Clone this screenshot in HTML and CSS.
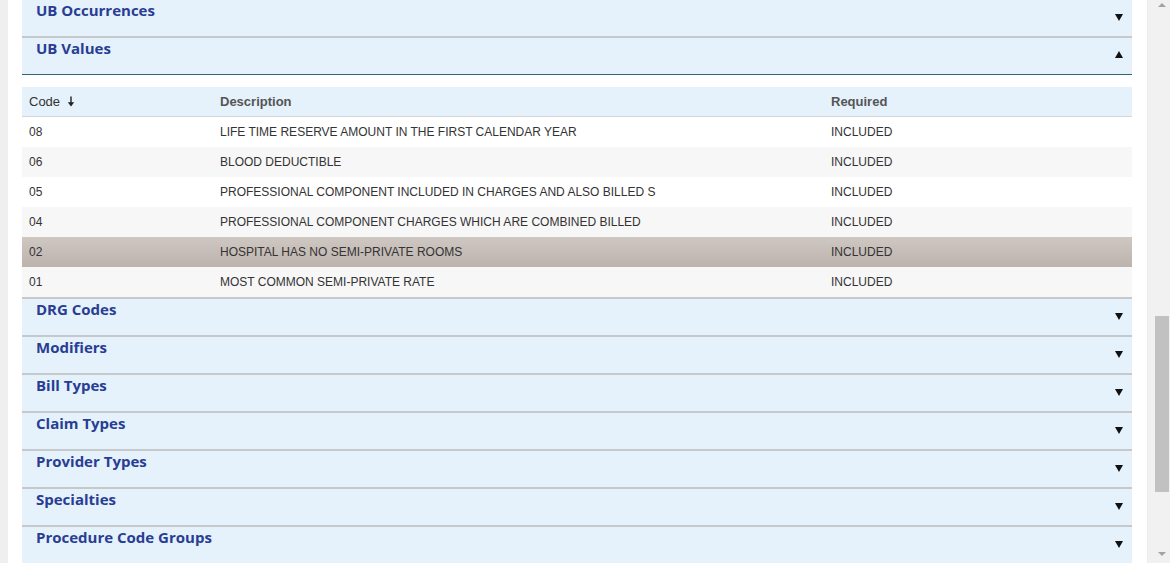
FILE: index.html
```html
<!DOCTYPE html>
<html lang="en">
<head>
<meta charset="utf-8">
<title>UB Values</title>
<link rel="stylesheet" href="styles.css">
</head>
<body>
<div class="page">
  <div class="gutter"></div>
  <main class="content">
    <div class="stack">
      <section class="panel">
        <div class="panel-head"><h2 class="panel-title">UB Occurrences</h2><span class="caret down"></span></div>
      </section>
      <section class="panel open">
        <div class="panel-head"><h2 class="panel-title">UB Values</h2><span class="caret up"></span></div>
        <div class="panel-body">
          <table class="grid">
            <thead>
              <tr>
                <th class="c-code">Code <svg class="sort" width="8" height="11" viewBox="0 0 8 11"><path d="M4 0.5V9" stroke="#222" stroke-width="1.4"/><path d="M0.8 6.2L4 10.5L7.2 6.2Z" fill="#222"/></svg></th>
                <th class="c-desc">Description</th>
                <th class="c-req">Required</th>
              </tr>
            </thead>
            <tbody>
              <tr><td>08</td><td>LIFE TIME RESERVE AMOUNT IN THE FIRST CALENDAR YEAR</td><td>INCLUDED</td></tr>
              <tr><td>06</td><td>BLOOD DEDUCTIBLE</td><td>INCLUDED</td></tr>
              <tr><td>05</td><td>PROFESSIONAL COMPONENT INCLUDED IN CHARGES AND ALSO BILLED S</td><td>INCLUDED</td></tr>
              <tr><td>04</td><td>PROFESSIONAL COMPONENT CHARGES WHICH ARE COMBINED BILLED</td><td>INCLUDED</td></tr>
              <tr class="selected"><td>02</td><td>HOSPITAL HAS NO SEMI-PRIVATE ROOMS</td><td>INCLUDED</td></tr>
              <tr><td>01</td><td>MOST COMMON SEMI-PRIVATE RATE</td><td>INCLUDED</td></tr>
            </tbody>
          </table>
        </div>
      </section>
      <section class="panel">
        <div class="panel-head"><h2 class="panel-title">DRG Codes</h2><span class="caret down"></span></div>
      </section>
      <section class="panel">
        <div class="panel-head"><h2 class="panel-title">Modifiers</h2><span class="caret down"></span></div>
      </section>
      <section class="panel">
        <div class="panel-head"><h2 class="panel-title">Bill Types</h2><span class="caret down"></span></div>
      </section>
      <section class="panel">
        <div class="panel-head"><h2 class="panel-title">Claim Types</h2><span class="caret down"></span></div>
      </section>
      <section class="panel">
        <div class="panel-head"><h2 class="panel-title">Provider Types</h2><span class="caret down"></span></div>
      </section>
      <section class="panel">
        <div class="panel-head"><h2 class="panel-title">Specialties</h2><span class="caret down"></span></div>
      </section>
      <section class="panel">
        <div class="panel-head"><h2 class="panel-title">Procedure Code Groups</h2><span class="caret down"></span></div>
      </section>
    </div>
  </main>
  <div class="scrollbar">
    <span class="sb-arrow sb-up"></span>
    <div class="sb-track"><div class="sb-thumb"></div></div>
    <span class="sb-arrow sb-down"></span>
  </div>
</div>
</body>
</html>
```

FILE: styles.css
```css
* { box-sizing: border-box; }
html, body {
  margin: 0;
  padding: 0;
  height: 563px;
  overflow: hidden;
  background: #f0f0f0;
}
.page {
  display: flex;
  height: 563px;
}
.gutter {
  width: 8px;
  flex: none;
  background: #efefef;
}
.content {
  flex: 1;
  background: #fff;
  padding: 0 15px 0 14px;
  overflow: hidden;
}
.stack {
  margin-top: -2px;
}
.panel-head {
  display: flex;
  align-items: flex-start;
  justify-content: space-between;
  height: 38px;
  border-top: 2px solid #c6c9cc;
  background: #e5f1fb;
  padding: 0 9px 0 14px;
}
.panel-title {
  margin: 0;
  font-family: "Open Sans", "Liberation Sans", sans-serif;
  font-weight: 700;
  font-size: 15px;
  line-height: 20px;
  color: #283d93;
}
.caret {
  width: 0;
  height: 0;
  margin-top: 14px;
  border-left: 4px solid transparent;
  border-right: 4px solid transparent;
}
.caret.down {
  border-top: 7px solid #111;
}
.caret.up {
  border-bottom: 7px solid #111;
  margin-top: 13px;
}
.panel.open .panel-head {
  height: 39px;
  border-bottom: 1px solid #2e6a6b;
}
.panel-body {
  padding-top: 12px;
}
.grid {
  width: 100%;
  border-collapse: separate;
  border-spacing: 0;
  font-family: "Liberation Sans", Arial, sans-serif;
  table-layout: fixed;
}
.grid th {
  height: 30px;
  background: #e5f1fb;
  border-bottom: 1px solid #d3d6d8;
  text-align: left;
  font-size: 13px;
  font-weight: 700;
  color: #555;
  padding: 0 0 0 7px;
}
.grid th.c-code { width: 191px; font-weight: 400; color: #333; }
.grid th.c-desc { width: 611px; }
.sort { vertical-align: -1px; margin-left: 3px; }
.grid td {
  height: 30px;
  font-size: 12px;
  color: #333;
  padding: 0 0 0 7px;
  white-space: nowrap;
  overflow: hidden;
}
.grid tbody tr:nth-child(even) td { background: #f7f7f7; }
.grid tbody tr.selected td {
  background: linear-gradient(#cfc7c2, #bcb3ad);
  color: #333;
}
.scrollbar {
  width: 23px;
  flex: none;
  background: #f1f1f1;
  display: flex;
  flex-direction: column;
  align-items: center;
  padding-left: 6px;
  border-left: 1px solid #ececec;
}
.sb-arrow {
  width: 0;
  height: 0;
  flex: none;
  border-left: 4px solid transparent;
  border-right: 4px solid transparent;
}
.sb-up {
  margin-top: 3px;
  border-bottom: 4px solid #a3a3a3;
}
.sb-down {
  margin-bottom: 7px;
  border-top: 4px solid #a3a3a3;
}
.sb-track {
  flex: 1;
  width: 100%;
  display: flex;
  justify-content: center;
  padding-top: 309px;
}
.sb-thumb {
  width: 14px;
  height: 176px;
  background: #c1c1c1;
}
```
